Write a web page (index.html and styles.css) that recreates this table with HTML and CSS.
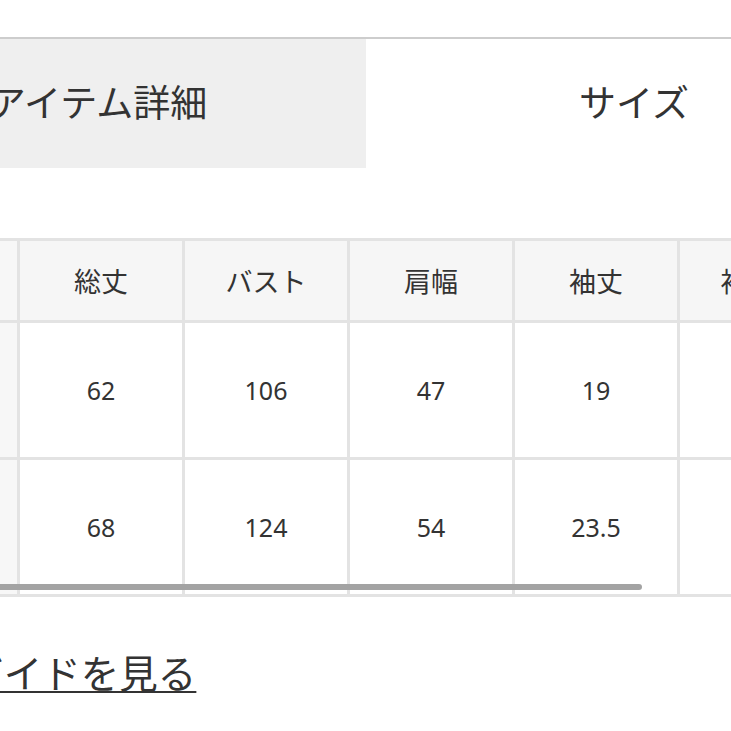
FILE: index.html
```html
<!DOCTYPE html>
<html lang="ja">
<head>
<meta charset="utf-8">
<link rel="stylesheet" href="styles.css">
</head>
<body>
<div class="page">
  <div class="tabs">
    <div class="tab active">アイテム詳細</div>
    <div class="tab">サイズ</div>
  </div>
  <div class="table-wrap">
    <table class="size-table">
      <tr class="head">
        <th class="label"></th>
        <th>総丈</th>
        <th>バスト</th>
        <th>肩幅</th>
        <th>袖丈</th>
        <th>袖口幅</th>
      </tr>
      <tr>
        <th class="label">M</th>
        <td>62</td>
        <td>106</td>
        <td>47</td>
        <td>19</td>
        <td>16</td>
      </tr>
      <tr>
        <th class="label">L</th>
        <td>68</td>
        <td>124</td>
        <td>54</td>
        <td>23.5</td>
        <td>18</td>
      </tr>
    </table>
    <div class="scrollbar"></div>
  </div>
  <a class="guide" href="#">サイズガイドを見る</a>
</div>
</body>
</html>
```

FILE: styles.css
```css
html, body {
  margin: 0;
  padding: 0;
  background: #ffffff;
}
body {
  width: 731px;
  height: 731px;
  overflow: hidden;
  font-family: "Noto Sans CJK JP", "Noto Sans", sans-serif;
  color: #333333;
}
.page {
  padding-top: 37px;
}
.tabs {
  display: flex;
  margin-left: -170px;
  width: 1100px;
  border-top: 2px solid #cdcdcd;
}
.tab {
  width: 536px;
  height: 129px;
  flex: none;
  display: flex;
  align-items: center;
  justify-content: center;
  padding-bottom: 6px;
  box-sizing: border-box;
  font-size: 37px;
  font-weight: 400;
  color: #333;
}
.tab.active {
  background: #efefef;
}
.table-wrap {
  position: relative;
  margin-top: 70px;
  margin-left: -148px;
  width: 1100px;
}
.size-table {
  border-collapse: collapse;
  table-layout: fixed;
  border: 3px solid #e3e3e3;
}
.size-table th,
.size-table td {
  width: 162px;
  padding: 0;
  border: 3px solid #e3e3e3;
  text-align: center;
  font-weight: 400;
  color: #333;
}
.size-table .head th {
  height: 79px;
  background: #f6f6f6;
  font-size: 27px;
}
.size-table td,
.size-table th.label {
  height: 134px;
}
.size-table .head th.label {
  height: 79px;
}
.size-table th.label {
  background: #f7f7f7;
}
.size-table td {
  font-family: "Noto Sans", "Noto Sans CJK JP", sans-serif;
  font-size: 25px;
  background: #fff;
}
.scrollbar {
  position: absolute;
  left: 0;
  bottom: 7px;
  width: 790px;
  height: 6px;
  background: #a3a3a3;
  border-radius: 0 4px 4px 0;
}
.guide {
  display: inline-block;
  margin-top: 52px;
  margin-left: -149px;
  font-size: 38.5px;
  line-height: 44px;
  color: #333;
  text-decoration: underline;
  text-decoration-thickness: 2px;
  text-underline-offset: 3px;
}
```
